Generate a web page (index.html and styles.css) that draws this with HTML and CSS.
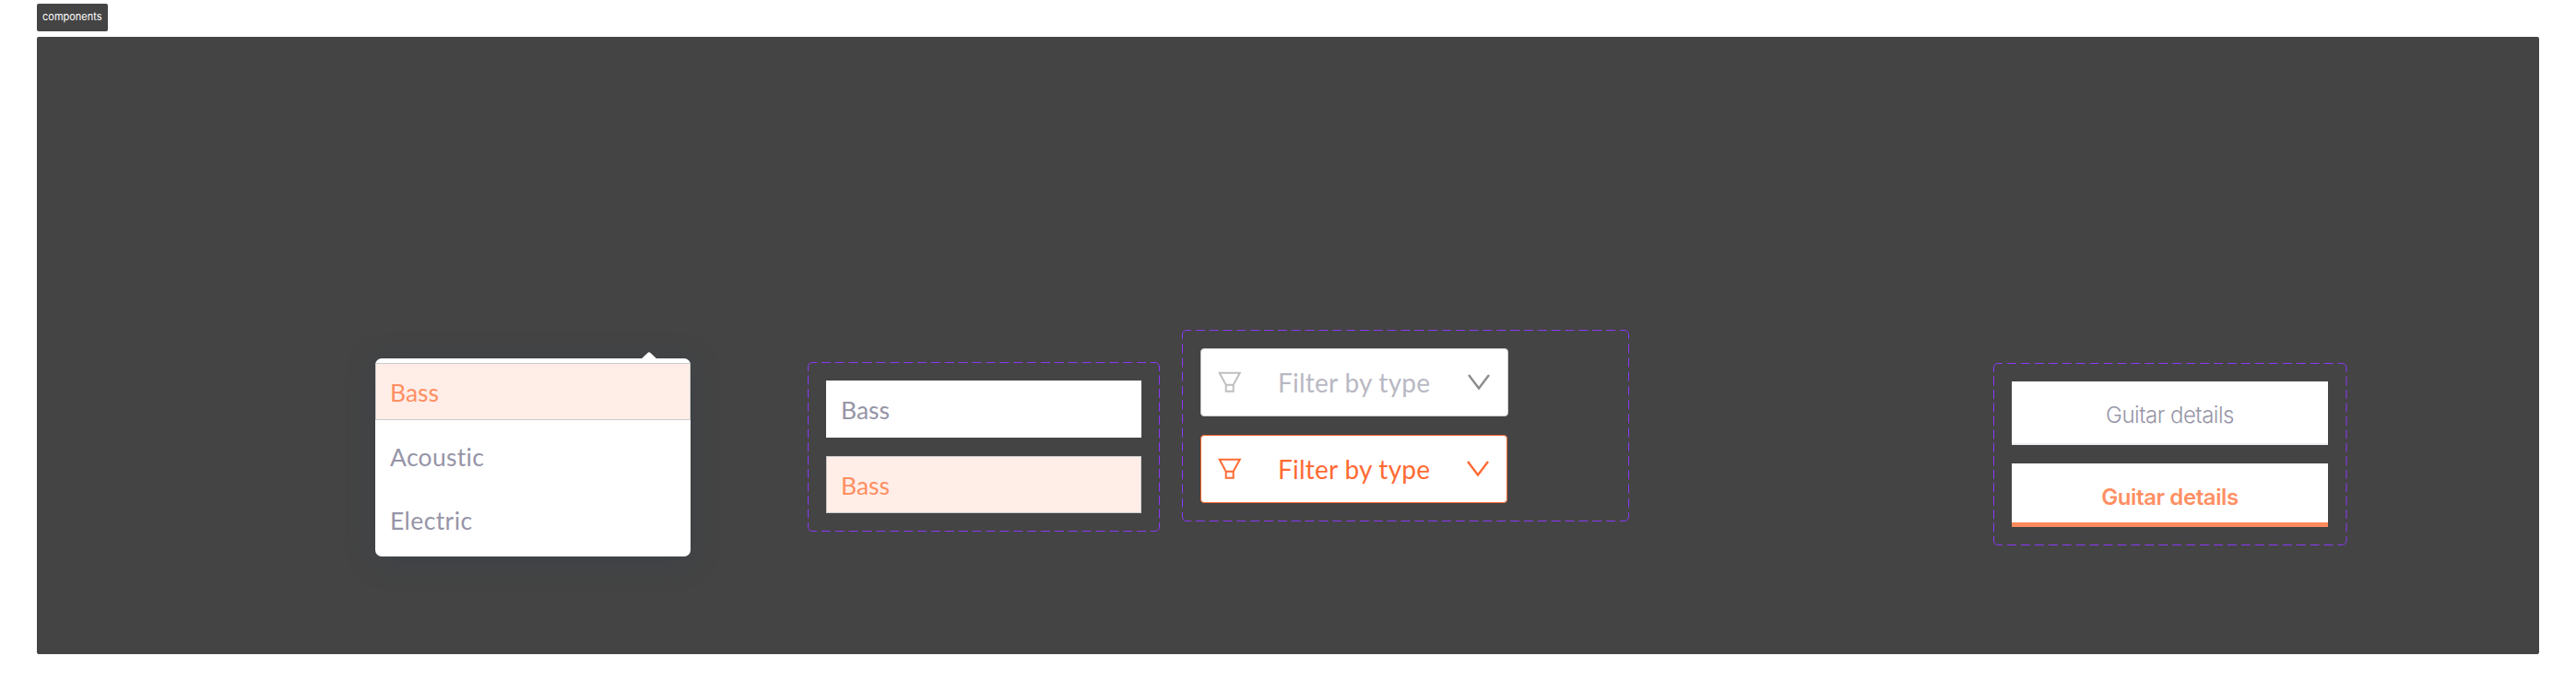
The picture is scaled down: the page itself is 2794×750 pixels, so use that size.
FILE: index.html
```html
<!DOCTYPE html>
<html lang="en">
<head>
<meta charset="utf-8">
<title>components</title>
<link rel="stylesheet" href="styles.css">
</head>
<body>
<div class="tag">components</div>
<main class="canvas">
  <section class="menu">
    <svg class="menu-arrow" width="18" height="8" viewBox="0 0 18 8"><path d="M0 8L7.5 1Q9 -.4 10.5 1L18 8Z" fill="#fff"/></svg>
    <div class="option option-active"><span class="bass">Bass</span></div>
    <div class="option"><span class="acoustic">Acoustic</span></div>
    <div class="option"><span class="electric">Electric</span></div>
  </section>

  <section class="variants variants-options">
    <svg class="outline" width="382" height="184">
      <path d="M.5 5A4.5 4.5 0 0 1 5 .5M377 .5A4.5 4.5 0 0 1 381.5 5M381.5 179A4.5 4.5 0 0 1 377 183.5M5 183.5A4.5 4.5 0 0 1 .5 179"/>
      <path class="dash" stroke-dasharray="10 4.88" d="M5 .5H377M5 183.5H377"/>
      <path class="dash" stroke-dasharray="10 4.5" d="M.5 5V179M381.5 5V179"/>
    </svg>
    <div class="option option-plain"><span class="bass">Bass</span></div>
    <div class="option option-active"><span class="bass">Bass</span></div>
  </section>

  <section class="variants variants-filters">
    <svg class="outline" width="485" height="208">
      <path d="M.5 5A4.5 4.5 0 0 1 5 .5M480 .5A4.5 4.5 0 0 1 484.5 5M484.5 203A4.5 4.5 0 0 1 480 207.5M5 207.5A4.5 4.5 0 0 1 .5 203"/>
      <path class="dash" stroke-dasharray="10 4.84" d="M5 .5H480M5 207.5H480"/>
      <path class="dash" stroke-dasharray="10 5.23" d="M.5 5V203M484.5 5V203"/>
    </svg>
    <div class="filter">
      <svg class="funnel" width="26" height="24" viewBox="0 0 26 24"><path d="M1.7 1.8H23.8L16.7 14.7V21.7H8.7V14.7ZM8.7 14.7H16.7"/></svg>
      <span class="filter-label">Filter by type</span>
      <svg class="chevron" width="24" height="18" viewBox="0 0 24 18"><path d="M1 1L12 15.5L23 1"/></svg>
    </div>
    <div class="filter filter-active">
      <svg class="funnel" width="26" height="24" viewBox="0 0 26 24"><path d="M1.7 1.8H23.8L16.7 14.7V21.7H8.7V14.7ZM8.7 14.7H16.7"/></svg>
      <span class="filter-label">Filter by type</span>
      <svg class="chevron" width="24" height="18" viewBox="0 0 24 18"><path d="M1 1L12 15.5L23 1"/></svg>
    </div>
  </section>

  <section class="variants variants-tabs">
    <svg class="outline" width="384" height="198">
      <path d="M.5 5A4.5 4.5 0 0 1 5 .5M378.5 .5A4.5 4.5 0 0 1 383 5M383 193A4.5 4.5 0 0 1 378.5 197.5M5 197.5A4.5 4.5 0 0 1 .5 193"/>
      <path class="dash" stroke-dasharray="10 4.94" d="M5 .5H378.5M5 197.5H378.5"/>
      <path class="dash" stroke-dasharray="10 4.46" d="M.5 5V193M383 5V193"/>
    </svg>
    <div class="tab"><span>Guitar details</span></div>
    <div class="tab tab-active"><span>Guitar details</span></div>
  </section>
</main>
</body>
</html>
```
FILE: styles.css
```css
* { box-sizing: border-box; }
body {
  margin: 0;
  padding: 4px 40px 40px;
  height: 750px;
  background: #fff;
  font-family: Inter, "Liberation Sans", sans-serif;
}
.tag {
  width: 76.5px;
  height: 30px;
  border-radius: 2px;
  background: #444;
  color: #fff;
  font-size: 11px;
  line-height: 29px;
  padding-left: 6px;
}
.canvas {
  display: flex;
  align-items: flex-start;
  height: 670px;
  margin-top: 6px;
  border-radius: 2px;
  background: #444;
}
.menu {
  position: relative;
  width: 342px;
  height: 215px;
  margin: 349px 0 0 367px;
  padding-top: 5px;
  display: flex;
  flex-direction: column;
  gap: 7.5px;
  border-radius: 7px;
  background: #fff;
  box-shadow: 0 4px 30px rgba(51, 65, 80, .4);
}
.menu-arrow { position: absolute; top: -7px; left: 287.5px; }
.option {
  flex: none;
  height: 62px;
  padding-left: 15px;
  border: 1px solid transparent;
  color: #9795a7;
  font-family: Lato, Inter, sans-serif;
  font-size: 26.5px;
  line-height: 62px;
  white-space: nowrap;
}
.option-active { background: #ffeee7; border-color: #ccc; color: #ff8f63; }
.option-plain { background: #fff; }
.bass { letter-spacing: 0; }
.acoustic { letter-spacing: .3px; }
.electric { letter-spacing: .4px; }
.variants {
  position: relative;
  display: flex;
  flex-direction: column;
  gap: 20px;
  padding: 20px;
}
.outline { position: absolute; inset: 0; fill: none; stroke: #8a38f5; }
.dash { stroke-dashoffset: 5; }
.variants-options { width: 382px; height: 184px; margin: 353px 0 0 127px; }
.variants-filters { width: 485px; height: 208px; margin: 318px 0 0 24px; }
.variants-tabs { width: 384px; height: 198px; margin: 354px 0 0 395px; }
.filter {
  display: flex;
  align-items: center;
  width: 334px;
  height: 74px;
  padding-left: 18px;
  border: 1px solid #ccc;
  border-radius: 4px;
  background: #fff;
  color: #b9b8c3;
  font-family: Lato, Inter, sans-serif;
  font-size: 28px;
  white-space: nowrap;
}
.filter-active { width: 333px; border-color: #ff6a33; color: #ff6a33; }
.funnel, .chevron { flex: none; fill: none; stroke: #bfbfbf; stroke-width: 2; }
.chevron { stroke-width: 2.4; }
.filter .chevron { stroke: #8c8c8c; }
.filter-active .funnel, .filter-active .chevron { stroke: #ff6a33; }
.filter-label { width: 206px; margin-left: 39px; letter-spacing: .25px; }
.filter-active .filter-label { width: 205px; }
.tab {
  width: 343px;
  height: 69px;
  border-bottom: 2px solid #ededf2;
  background: #fff;
  color: #9795a7;
  font-size: 24px;
  font-weight: 300;
  line-height: 73px;
  letter-spacing: -.5px;
  text-align: center;
  white-space: nowrap;
}
.tab-active { border-bottom: 5px solid #ff8a5c; color: #ff8f63; font-weight: 600; letter-spacing: -.4px; }
```
